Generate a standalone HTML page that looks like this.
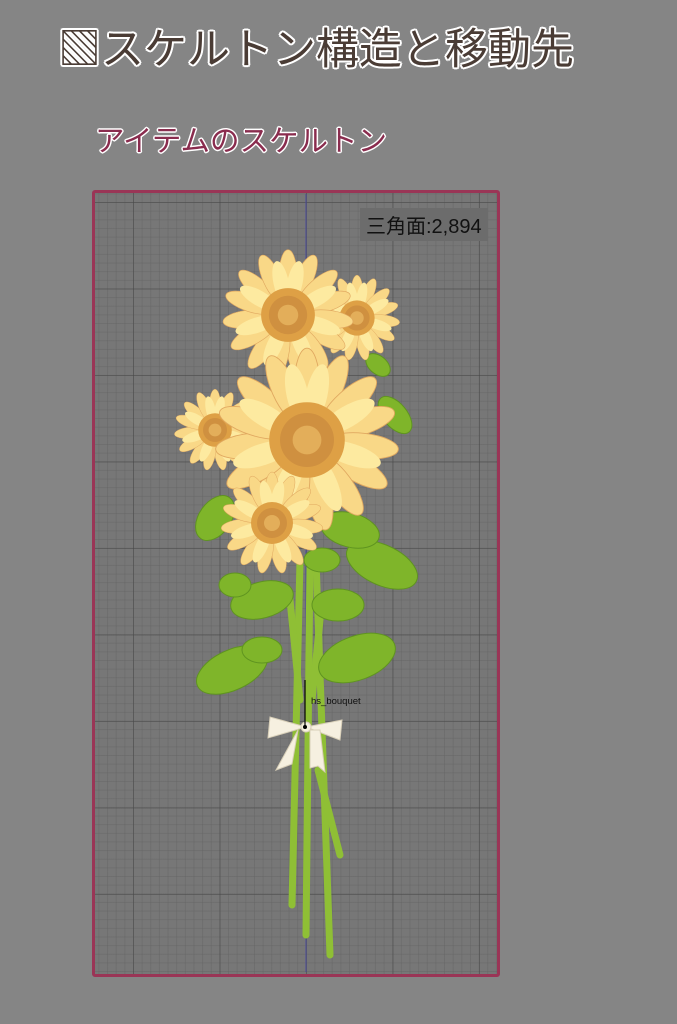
<!DOCTYPE html>
<html><head><meta charset="utf-8"><style>
html,body{margin:0;padding:0}
body{width:677px;height:1024px;background:#858585;position:relative;overflow:hidden;font-family:"Liberation Sans","Noto Sans CJK JP",sans-serif}
.t1{position:absolute;left:58px;top:24px;font-size:43px;line-height:52px;color:#4a3c35;letter-spacing:0px;
text-shadow:2px 0 0 #fff,-2px 0 0 #fff,0 2px 0 #fff,0 -2px 0 #fff,1.5px 1.5px 0 #fff,-1.5px -1.5px 0 #fff,1.5px -1.5px 0 #fff,-1.5px 1.5px 0 #fff;white-space:nowrap}
.t2{position:absolute;left:95px;top:124px;font-size:29.5px;line-height:36px;color:#8a2c4e;letter-spacing:0px;
text-shadow:1.5px 0 0 #fff,-1.5px 0 0 #fff,0 1.5px 0 #fff,0 -1.5px 0 #fff,1px 1px 0 #fff,-1px -1px 0 #fff,1px -1px 0 #fff,-1px 1px 0 #fff;white-space:nowrap}
.panel{position:absolute;left:92px;top:190px;width:402px;height:781px;border:3px solid #9a3556;border-radius:3px;
background-color:#777;
background-image:
linear-gradient(90deg,rgba(70,70,70,.5) 1px,transparent 1px),
linear-gradient(0deg,rgba(70,70,70,.5) 1px,transparent 1px),
linear-gradient(90deg,rgba(100,100,100,.45) 1px,transparent 1px),
linear-gradient(0deg,rgba(100,100,100,.45) 1px,transparent 1px);
background-size:86.5px 86.5px,86.5px 86.5px,8.65px 8.65px,8.65px 8.65px;
background-position:38px 10px,38px 10px,38px 10px,38px 10px;overflow:hidden}
.tri{position:absolute;left:360px;top:208px;background:#6c6c6c;padding:2px 6px;font-size:20px;color:#111;white-space:nowrap}
</style></head><body>
<div class="t1">▧スケルトン構造と移動先</div>
<div class="t2">アイテムのスケルトン</div>
<div class="panel"></div>
<div class="tri">三角面:2,894</div>
<svg width="677" height="1024" style="position:absolute;left:0;top:0">
<defs>
<g id="sf">
<g fill="#f9d887" stroke="#e0a860" stroke-width="0.01">
<ellipse cx="0" cy="-0.62" rx="0.14" ry="0.4"/>
<ellipse cx="0" cy="-0.62" rx="0.14" ry="0.4" transform="rotate(24)"/>
<ellipse cx="0" cy="-0.62" rx="0.14" ry="0.4" transform="rotate(48)"/>
<ellipse cx="0" cy="-0.62" rx="0.14" ry="0.4" transform="rotate(72)"/>
<ellipse cx="0" cy="-0.62" rx="0.14" ry="0.4" transform="rotate(96)"/>
<ellipse cx="0" cy="-0.62" rx="0.14" ry="0.4" transform="rotate(120)"/>
<ellipse cx="0" cy="-0.62" rx="0.14" ry="0.4" transform="rotate(144)"/>
<ellipse cx="0" cy="-0.62" rx="0.14" ry="0.4" transform="rotate(168)"/>
<ellipse cx="0" cy="-0.62" rx="0.14" ry="0.4" transform="rotate(192)"/>
<ellipse cx="0" cy="-0.62" rx="0.14" ry="0.4" transform="rotate(216)"/>
<ellipse cx="0" cy="-0.62" rx="0.14" ry="0.4" transform="rotate(240)"/>
<ellipse cx="0" cy="-0.62" rx="0.14" ry="0.4" transform="rotate(264)"/>
<ellipse cx="0" cy="-0.62" rx="0.14" ry="0.4" transform="rotate(288)"/>
<ellipse cx="0" cy="-0.62" rx="0.14" ry="0.4" transform="rotate(312)"/>
<ellipse cx="0" cy="-0.62" rx="0.14" ry="0.4" transform="rotate(336)"/>
</g>
<g fill="#fdeaa0">
<ellipse cx="0" cy="-0.52" rx="0.12" ry="0.34" transform="rotate(12)"/>
<ellipse cx="0" cy="-0.52" rx="0.12" ry="0.34" transform="rotate(60)"/>
<ellipse cx="0" cy="-0.52" rx="0.12" ry="0.34" transform="rotate(108)"/>
<ellipse cx="0" cy="-0.52" rx="0.12" ry="0.34" transform="rotate(156)"/>
<ellipse cx="0" cy="-0.52" rx="0.12" ry="0.34" transform="rotate(204)"/>
<ellipse cx="0" cy="-0.52" rx="0.12" ry="0.34" transform="rotate(252)"/>
<ellipse cx="0" cy="-0.52" rx="0.12" ry="0.34" transform="rotate(300)"/>
<ellipse cx="0" cy="-0.52" rx="0.12" ry="0.34" transform="rotate(348)"/>
</g>
<circle r="0.42" fill="#dea045"/>
<circle r="0.3" fill="#cf9040"/>
<circle r="0.16" fill="#e3ae5a"/>
</g>
</defs>
<line x1="306" y1="194" x2="306" y2="972" stroke="#4a4a9a" stroke-width="1"/>
<g stroke="#8fbf35" stroke-width="7" stroke-linecap="round" fill="none">
<path d="M300 560 L292 905"/><path d="M310 560 L306 935"/><path d="M316 560 L330 955"/>
<path d="M318 770 L340 855"/><path d="M290 600 L300 700"/><path d="M322 600 L312 700"/>
</g>
<g fill="#7fb52a" stroke="#5f9420" stroke-width="1">
<ellipse cx="232" cy="670" rx="38" ry="20" transform="rotate(-25 232 670)"/>
<ellipse cx="262" cy="650" rx="20" ry="13"/>
<ellipse cx="357" cy="658" rx="40" ry="22" transform="rotate(-20 357 658)"/>
<ellipse cx="262" cy="600" rx="32" ry="18" transform="rotate(-15 262 600)"/>
<ellipse cx="338" cy="605" rx="26" ry="16"/>
<ellipse cx="235" cy="585" rx="16" ry="12"/>
<ellipse cx="382" cy="565" rx="38" ry="20" transform="rotate(25 382 565)"/>
<ellipse cx="350" cy="530" rx="30" ry="17" transform="rotate(15 350 530)"/>
<ellipse cx="215" cy="518" rx="25" ry="16" transform="rotate(-55 215 518)"/>
<ellipse cx="322" cy="560" rx="18" ry="12"/>
<ellipse cx="395" cy="415" rx="22" ry="12" transform="rotate(50 395 415)"/>
<ellipse cx="378" cy="365" rx="14" ry="9" transform="rotate(40 378 365)"/>
<ellipse cx="220" cy="430" rx="14" ry="20"/>
</g>
<use href="#sf" transform="translate(215 430) scale(40)"/>
<use href="#sf" transform="translate(357 318) scale(42)"/>
<use href="#sf" transform="translate(288 315) scale(64)"/>
<use href="#sf" transform="translate(307 440) scale(90)"/>
<use href="#sf" transform="translate(272 523) scale(50)"/>
<g fill="#f6f0e0" stroke="#d8cfb8" stroke-width="1">
<path d="M306 727 L270 717 L268 738 Z"/><path d="M306 727 L342 720 L340 740 Z"/>
<path d="M298 730 L276 770 L292 764 Z"/>
<path d="M310 730 L310 768 L318 766 L325 772 L320 730 Z"/>
<circle cx="306" cy="727" r="5"/>
</g>
<line x1="305" y1="680" x2="305" y2="727" stroke="#000" stroke-width="1.2"/>
<circle cx="305" cy="727" r="2" fill="#000"/>
<text x="311" y="704" font-size="9.5" font-family="Liberation Sans, sans-serif" fill="#111">hs_bouquet</text>
</svg>
</body></html>
